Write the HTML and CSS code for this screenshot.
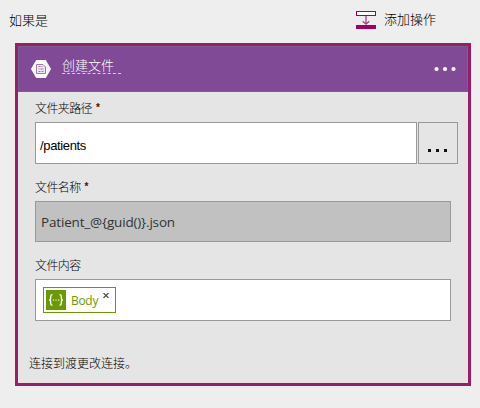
FILE: index.html
```html
<!DOCTYPE html>
<html lang="zh-CN">
<head>
<meta charset="utf-8">
<title>创建文件</title>
<link rel="stylesheet" href="styles.css">
</head>
<body>
<header class="branch">
  <span class="branch-name">如果是</span>
  <a class="add-action">
    <svg class="add-icon" width="20" height="18" viewBox="0 0 20 18">
      <rect x=".5" y=".5" width="19" height="4" fill="#fff" stroke="#a0005f"/>
      <path d="M0 14h20v4H0z" fill="#a0005f"/>
      <path d="M10 5v8M6.7 10.2L10 13.2l3.3-3" fill="none" stroke="#a9417f" stroke-width="1.3"/>
    </svg>
    <span>添加操作</span>
  </a>
</header>
<main class="card">
  <div class="card-header">
    <svg class="card-icon" width="20" height="18" viewBox="0 0 20 18">
      <path d="M5.2 0h9.6L20 9l-5.2 9H5.2L0 9z" fill="#fff"/>
      <path d="M5.5 4.5h6.5l2.5 2.500v6.500h-9z" fill="#f0e8f5" stroke="#9d78b2"/>
      <path d="M7.500 6.500h2M10.500 6.500h1M7.500 9h1M9.500 9h3M7.500 11.500h2M10.500 11.500h2" stroke="#9d78b2" stroke-width="1.100"/>
    </svg>
    <span class="title">创建文件</span>
    <svg class="more" width="22" height="6" viewBox="0 0 22 6" fill="#fff">
      <circle cx="2.500" cy="3" r="2.100"/><circle cx="11" cy="3" r="2.100"/><circle cx="19.500" cy="3" r="2.100"/>
    </svg>
  </div>
  <div class="card-body">
    <label class="label">文件夹路径<span class="star">*</span></label>
    <div class="path-row">
      <div class="field path">/patients</div>
      <div class="browse"><i></i><i></i><i></i></div>
    </div>
    <label class="label">文件名称<span class="star">*</span></label>
    <div class="field name">Patient_@{guid()}.json</div>
    <label class="label">文件内容</label>
    <div class="field content">
      <span class="token">
        <svg width="20" height="20" viewBox="0 0 20 20">
          <path d="M0 0h20v20H0z" fill="#6a9a00"/>
          <path d="M6.500 4.700Q4.700 4.700 4.700 6.500v1.800Q4.700 10 3.200 10q1.500 0 1.500 1.700v1.800q0 1.800 1.800 1.800M13.500 4.700q1.800 0 1.800 1.800v1.800q0 1.700 1.500 1.700-1.500 0-1.500 1.700v1.800q0 1.800-1.800 1.800" fill="none" stroke="#fff" stroke-width="1.300"/>
          <path d="M6.800 9.400h1.300v1.300H6.800zM9.400 9.400h1.300v1.300H9.400zM12 9.400h1.300v1.300H12z" fill="#e6f0cf"/>
        </svg>
        <span class="token-name">Body</span>
        <svg class="remove" width="6" height="5" viewBox="0 0 6 5"><path d="M.5 0l5 5M5.500 0l-5 5" stroke="#444" stroke-width="1.100"/></svg>
      </span>
    </div>
    <p class="connection">连接到渡更改连接。</p>
  </div>
</main>
</body>
</html>
```
FILE: styles.css
```css
* { box-sizing: border-box; }
body {
  margin: 0;
  height: 408px;
  overflow: hidden;
  background: #eee;
  color: #000;
  font-family: "Noto Sans CJK SC", sans-serif;
  font-size: 12px;
  font-weight: 300;
}
.branch {
  display: flex;
  justify-content: space-between;
  height: 43px;
  padding: 10px 44px 0 9px;
  font-size: 13px;
  line-height: 20px;
}
.add-action { display: flex; height: 20px; margin-top: -1px; }
.add-icon { margin: 2px 8px 0 0; }
.card {
  width: 456px;
  height: 343px;
  margin-left: 15px;
  border: 3px solid #981f66;
  background: #e5e5e5;
}
.card-header {
  display: flex;
  height: 46px;
  border: 1px solid #79608f;
  background: #804a96;
  color: #fff;
}
.card-icon { margin: 13px 0 0 12px; }
.title {
  height: 19px;
  margin: 8px 0 0 11px;
  padding-right: 7px;
  border-bottom: 1px dashed #d9c9e2;
  font-size: 13px;
  line-height: 20px;
}
.more { margin: 19px 11px 0 auto; }
.card-body { padding: 6px 10px 0 17px; }
.label {
  display: flex;
  height: 24px;
  line-height: 20px;
  letter-spacing: -.6px;
}
.star {
  margin-left: 4px;
  color: #401010;
  font: bold 10px/19px "Liberation Sans", sans-serif;
}
.field {
  width: 416px;
  border: 1px solid #999;
  background: #fff;
}
.path-row { display: flex; gap: 1px; height: 42px; margin-bottom: 13px; }
.path {
  width: 382px;
  padding: 5px 0 0 4px;
  font: 13px/36px "Liberation Sans", sans-serif;
  letter-spacing: -.35px;
}
.browse {
  display: flex;
  gap: 5px;
  width: 40px;
  padding: 26px 0 0 9px;
  border: 1px solid #999;
}
.browse i { width: 3px; height: 3px; background: #111; }
.name {
  height: 41px;
  margin-bottom: 13px;
  padding-left: 5px;
  background: #c1c1c1;
  color: #333;
  font: 13.5px/40px "Open Sans", sans-serif;
  letter-spacing: -.17px;
}
.content { height: 42px; padding: 7px; }
.token {
  display: flex;
  width: 73px;
  height: 26px;
  padding: 2px;
  border: 1px solid #6a9a00;
}
.token-name {
  margin-left: 5px;
  color: #6a9a00;
  font: 12px/21px "Open Sans", sans-serif;
  letter-spacing: -.3px;
}
.remove { margin: 3px 0 0 5px; }
.connection { margin: 32px 0 0 -6px; line-height: 20px; }
```
